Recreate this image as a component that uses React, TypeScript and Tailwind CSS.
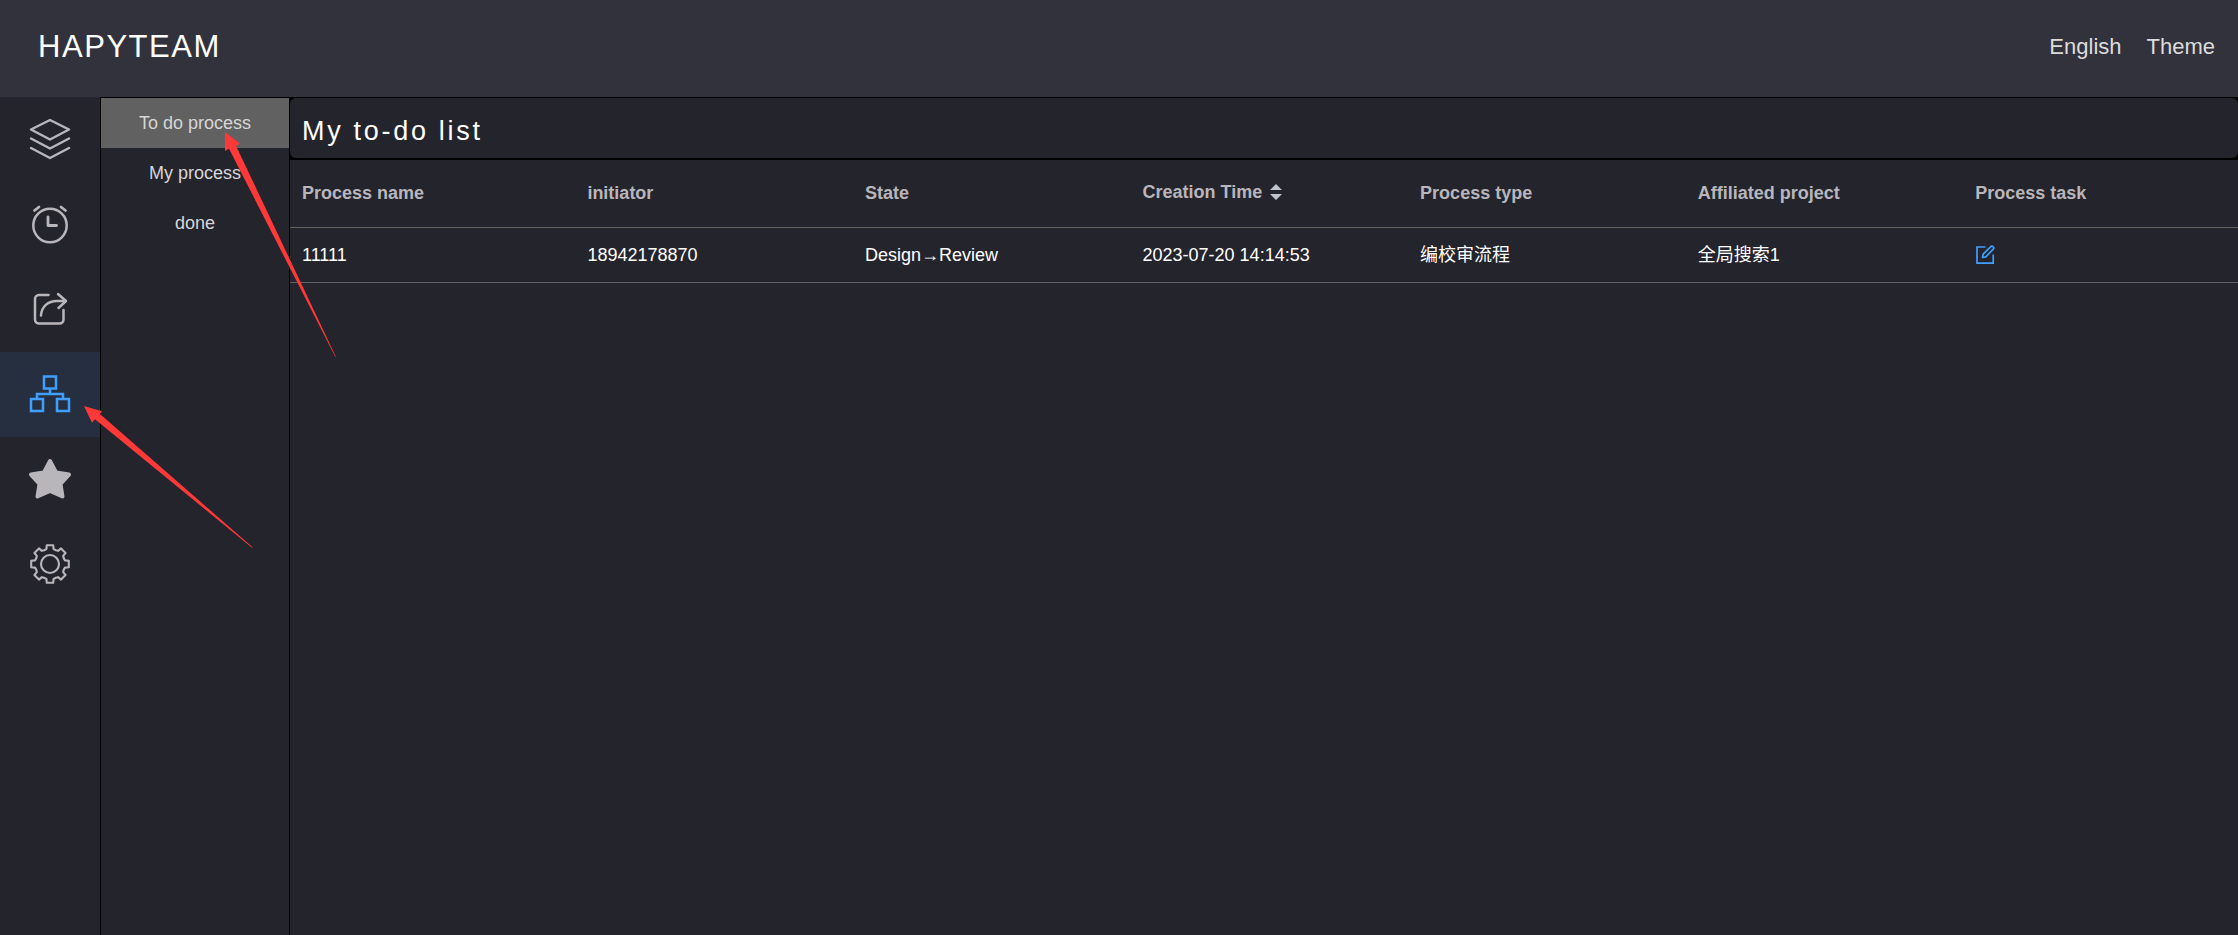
import React, { useState } from "react";

const toothPoints = [
  [-5.6, -13.8],
  [-3.6, -15],
  [-3.2, -18.8],
  [3.2, -18.8],
  [3.6, -15],
  [5.6, -13.8],
];

const gearPoints = Array.from({ length: 8 }, (_, k) => {
  const a = (k * Math.PI) / 4;
  return toothPoints
    .map(([x, y]) => {
      const px = 20 + x * Math.cos(a) - y * Math.sin(a);
      const py = 20 + x * Math.sin(a) + y * Math.cos(a);
      return `${px.toFixed(2)},${py.toFixed(2)}`;
    })
    .join(" ");
}).join(" ");

const railItems = [
  {
    id: "layers",
    label: "Projects",
    icon: (
      <>
        <path d="M20 1 39 10.5 20 20.5 1 10.5Z" />
        <path d="M1 19.5 20 29.5 39 19.5" />
        <path d="M1 29 20 39 39 29" />
      </>
    ),
  },
  {
    id: "clock",
    label: "Schedule",
    icon: (
      <>
        <circle cx="20" cy="21.5" r="16.7" />
        <path d="M4.5 6.5 9 3M31 3l4.5 3.5" strokeWidth="2.8" />
        <path d="M18 13v8.5h8.5" strokeWidth="2.8" />
      </>
    ),
  },
  {
    id: "share",
    label: "Share",
    icon: (
      <>
        <path d="M18.5 6H9a4 4 0 0 0-4 4v20.500a4 4 0 0 0 4 4h20.500a4 4 0 0 0 4-4v-9.500" />
        <path d="M11 26.500C11.500 17.500 18 12 27 12h8.500" />
        <path d="M28 5 36 12 28.500 19" />
      </>
    ),
  },
  {
    id: "process",
    label: "Process",
    icon: (
      <g strokeLinecap="butt" strokeLinejoin="miter">
        <path d="M14 2.500h12v12H14ZM1 25h12v12H1ZM27 25h12v12H27Z" />
        <path d="M20 14.500V20M7 25v-5h26v5" />
      </g>
    ),
  },
  {
    id: "star",
    label: "Favorites",
    icon: (
      <path
        d="M20 2 26.200 13.600 39 15.600 30.500 25 32.500 37.500 20 32 7.500 37.500 9.500 25 1 15.600 13.800 13.600Z"
        fill="currentColor"
        strokeWidth="4"
      />
    ),
  },
  {
    id: "settings",
    label: "Settings",
    icon: (
      <g strokeWidth="2.1">
        <polygon points={gearPoints} />
        <circle cx="20" cy="20" r="9" />
      </g>
    ),
  },
];

const menuItems = ["To do process", "My process", "done"];

const rows = [
  {
    name: "11111",
    initiator: "18942178870",
    state: "Design→Review",
    created: "2023-07-20 14:14:53",
    type: "编校审流程",
    project: "全局搜索1",
  },
];

function EditIcon() {
  return (
    <svg viewBox="0 0 20 20" className="size-5" fill="none" stroke="currentColor" strokeWidth="1.7">
      <path d="M10.500 2H2v16.200h16.200V9.500" />
      <path
        d="M7.500 12.500 8.200 9.200 15.800 1.600a1.500 1.500 0 0 1 2.200 0l.3.300a1.500 1.500 0 0 1 0 2.200L10.800 11.800Z"
        strokeLinejoin="round"
      />
    </svg>
  );
}

function Annotations() {
  return (
    <svg
      className="pointer-events-none absolute top-0 left-0 h-[560px] w-[350px] fill-[#ff3838]"
      aria-hidden="true"
    >
      <path d="M225 132 240 143.700 236 145.700 336 357 335.400 357 229 148.700 225 151Z" />
      <path d="M84 406 102 411.300 100 414 252.600 547.300 252 547.700 95 419.300 92 422.700Z" />
    </svg>
  );
}

export default function App() {
  const [section, setSection] = useState("process");
  const [menu, setMenu] = useState("To do process");

  return (
    <div className="relative flex min-h-screen flex-col bg-[#24242d] font-['Liberation_Sans','Noto_Sans_CJK_SC',sans-serif] text-lg text-white">
      <header className="flex h-[97px] items-center justify-between bg-[#32323c] pr-[23px] pb-0.5 pl-[38px]">
        <h1 className="text-[31px] tracking-wider">HAPYTEAM</h1>
        <div className="flex items-center gap-[25px] text-[22px] text-[#dcdcdc]">
          <button type="button">English</button>
          <button type="button">Theme</button>
        </div>
      </header>

      <div className="flex grow">
        <nav aria-label="Sections" className="flex w-[100px] shrink-0 flex-col">
          {railItems.map((item) => (
            <button
              key={item.id}
              type="button"
              aria-label={item.label}
              onClick={() => setSection(item.id)}
              className={`flex h-[85px] items-center justify-center pb-0.5 ${
                section === item.id ? "bg-[#262f40] text-[#409eff]" : "text-[#b9b6bb]"
              }`}
            >
              <svg
                viewBox="0 0 40 40"
                className="size-10 overflow-visible"
                fill="none"
                stroke="currentColor"
                strokeWidth="2.5"
                strokeLinecap="round"
                strokeLinejoin="round"
              >
                {item.icon}
              </svg>
            </button>
          ))}
        </nav>

        <nav
          aria-label="Process menu"
          className="flex w-[190px] shrink-0 flex-col border border-b-0 border-black"
        >
          {menuItems.map((label) => (
            <button
              key={label}
              type="button"
              onClick={() => setMenu(label)}
              className={`h-[50px] text-[#d6d6d6] ${menu === label ? "bg-[#616161]" : ""}`}
            >
              {label}
            </button>
          ))}
        </nav>

        <main className="min-w-0 grow">
          <div className="border-t border-b-2 border-black bg-black">
            <h2 className="flex h-[60px] items-center rounded-md bg-[#24242d] px-3 pt-1.5 text-[27px] tracking-widest">
              My to-do list
            </h2>
          </div>
          <table className="w-full table-fixed border-collapse text-left">
            <thead className="text-[#b9b6bb]">
              <tr className="h-[67px] border-b border-[#616161]">
                <th className="w-[14.65%] px-3">Process name</th>
                <th className="w-[14.25%] px-3">initiator</th>
                <th className="w-[14.25%] px-3">State</th>
                <th className="w-[14.25%] px-3">
                  <button type="button" className="flex items-center gap-2 pb-0.5 font-bold">
                    Creation Time
                    <svg viewBox="0 0 12 16" className="h-4 w-3 fill-[#c0c4cc]" aria-hidden="true">
                      <path d="M6 0 12 6H0ZM6 16 0 10h12Z" />
                    </svg>
                  </button>
                </th>
                <th className="w-[14.25%] px-3">Process type</th>
                <th className="w-[14.25%] px-3">Affiliated project</th>
                <th className="px-3">Process task</th>
              </tr>
            </thead>
            <tbody>
              {rows.map((row) => (
                <tr key={row.name} className="h-[55px] border-b border-[#616161]">
                  <td className="px-3">{row.name}</td>
                  <td className="px-3">{row.initiator}</td>
                  <td className="px-3">{row.state}</td>
                  <td className="px-3">{row.created}</td>
                  <td className="px-3">{row.type}</td>
                  <td className="px-3">{row.project}</td>
                  <td className="px-3">
                    <button type="button" aria-label="Edit" className="flex text-[#409eff]">
                      <EditIcon />
                    </button>
                  </td>
                </tr>
              ))}
            </tbody>
          </table>
        </main>
      </div>
      <Annotations />
    </div>
  );
}
